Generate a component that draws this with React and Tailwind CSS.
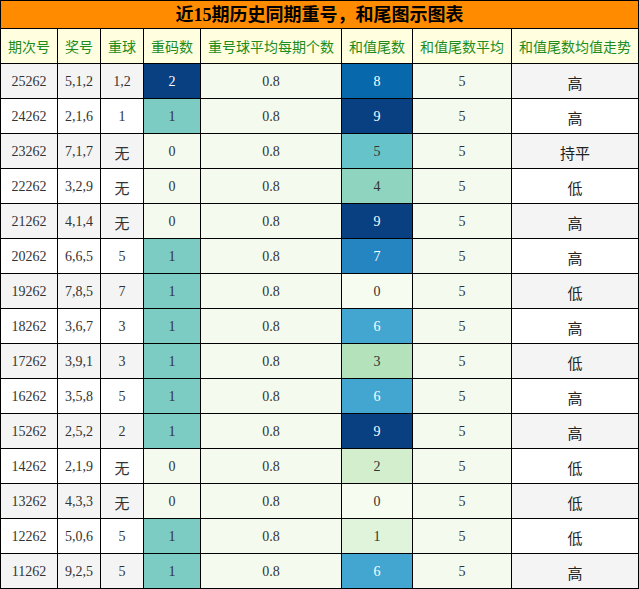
import React from "react";

const rows = [
  ["25262", "5,1,2", "1,2", 2, "0.8", 8, "5", "高"],
  ["24262", "2,1,6", "1", 1, "0.8", 9, "5", "高"],
  ["23262", "7,1,7", "无", 0, "0.8", 5, "5", "持平"],
  ["22262", "3,2,9", "无", 0, "0.8", 4, "5", "低"],
  ["21262", "4,1,4", "无", 0, "0.8", 9, "5", "高"],
  ["20262", "6,6,5", "5", 1, "0.8", 7, "5", "高"],
  ["19262", "7,8,5", "7", 1, "0.8", 0, "5", "低"],
  ["18262", "3,6,7", "3", 1, "0.8", 6, "5", "高"],
  ["17262", "3,9,1", "3", 1, "0.8", 3, "5", "低"],
  ["16262", "3,5,8", "5", 1, "0.8", 6, "5", "高"],
  ["15262", "2,5,2", "2", 1, "0.8", 9, "5", "高"],
  ["14262", "2,1,9", "无", 0, "0.8", 2, "5", "低"],
  ["13262", "4,3,3", "无", 0, "0.8", 0, "5", "低"],
  ["12262", "5,0,6", "5", 1, "0.8", 1, "5", "低"],
  ["11262", "9,2,5", "5", 1, "0.8", 6, "5", "高"],
];

const heat = {
  0: "bg-[#f7fcf0] text-[#333]",
  1: "bg-[#e0f3db] text-[#333]",
  2: "bg-[#d3eecd] text-[#333]",
  3: "bg-[#b4e2ba] text-[#333]",
  4: "bg-[#8fd4be] text-[#333]",
  5: "bg-[#67c3ca] text-[#333]",
  6: "bg-[#43a6d0] text-white",
  7: "bg-[#2485c0] text-white",
  8: "bg-[#0868ac] text-white",
  9: "bg-[#084081] text-white",
};

const heat4 = {
  0: "bg-[#f4fbee] text-[#333]",
  1: "bg-[#7dccc4] text-[#333]",
  2: "bg-[#084081] text-white",
};

const headers = ["期次号", "奖号", "重球", "重码数", "重号球平均每期个数", "和值尾数", "和值尾数平均", "和值尾数均值走势"];
const widths = ["w-[57px]", "w-[43px]", "w-[43px]", "w-[57px]", "w-[141px]", "w-[71px]", "w-[99px]", "w-[127px]"];

export default function App() {
  const td = "border border-black text-center p-0 h-[35px] text-[14px]";
  return (
    <div className="w-[639px] h-[589px] bg-white font-['Liberation_Serif','Noto_Sans_CJK_SC',serif]">
      <table className="table-fixed border-collapse w-[638px]">
        <colgroup>
          {widths.map((w, i) => (
            <col key={i} className={w} />
          ))}
        </colgroup>
        <thead>
          <tr>
            <th colSpan={8} className="border border-black bg-[#ff8c00] h-[28px] p-0 text-[18px] font-bold text-black leading-none">
              近15期历史同期重号，和尾图示图表
            </th>
          </tr>
          <tr>
            {headers.map((h, i) => (
              <th key={i} className="border border-black bg-[#ffffe0] h-[35px] p-0 font-normal text-[14px] text-[#1d8c1d] font-['Noto_Sans_CJK_SC',sans-serif] whitespace-nowrap">
                {h}
              </th>
            ))}
          </tr>
        </thead>
        <tbody>
          {rows.map((r, idx) => {
            const alt = idx % 2 === 0 ? "bg-[#f4f4f4]" : "bg-white";
            return (
              <tr key={idx}>
                <td className={`${td} ${alt} text-[#333]`}>{r[0]}</td>
                <td className={`${td} ${alt} text-[#333]`}>{r[1]}</td>
                <td className={`${td} ${alt} text-[#333]`}>
                  {r[2] === "无" ? <span className="text-[15px] relative top-[2px] font-['Noto_Sans_CJK_SC',sans-serif]">无</span> : r[2]}
                </td>
                <td className={`${td} ${heat4[r[3]]}`}>{r[3]}</td>
                <td className={`${td} bg-[#f4fbee] text-[#333]`}>{r[4]}</td>
                <td className={`${td} ${heat[r[5]]}`}>{r[5]}</td>
                <td className={`${td} bg-[#f4fbee] text-[#333]`}>{r[6]}</td>
                <td className={`${td} ${alt} text-[#222]`}>
                  <span className="relative top-[2px] text-[15px] font-['Noto_Sans_CJK_SC',sans-serif]">{r[7]}</span>
                </td>
              </tr>
            );
          })}
        </tbody>
      </table>
    </div>
  );
}
